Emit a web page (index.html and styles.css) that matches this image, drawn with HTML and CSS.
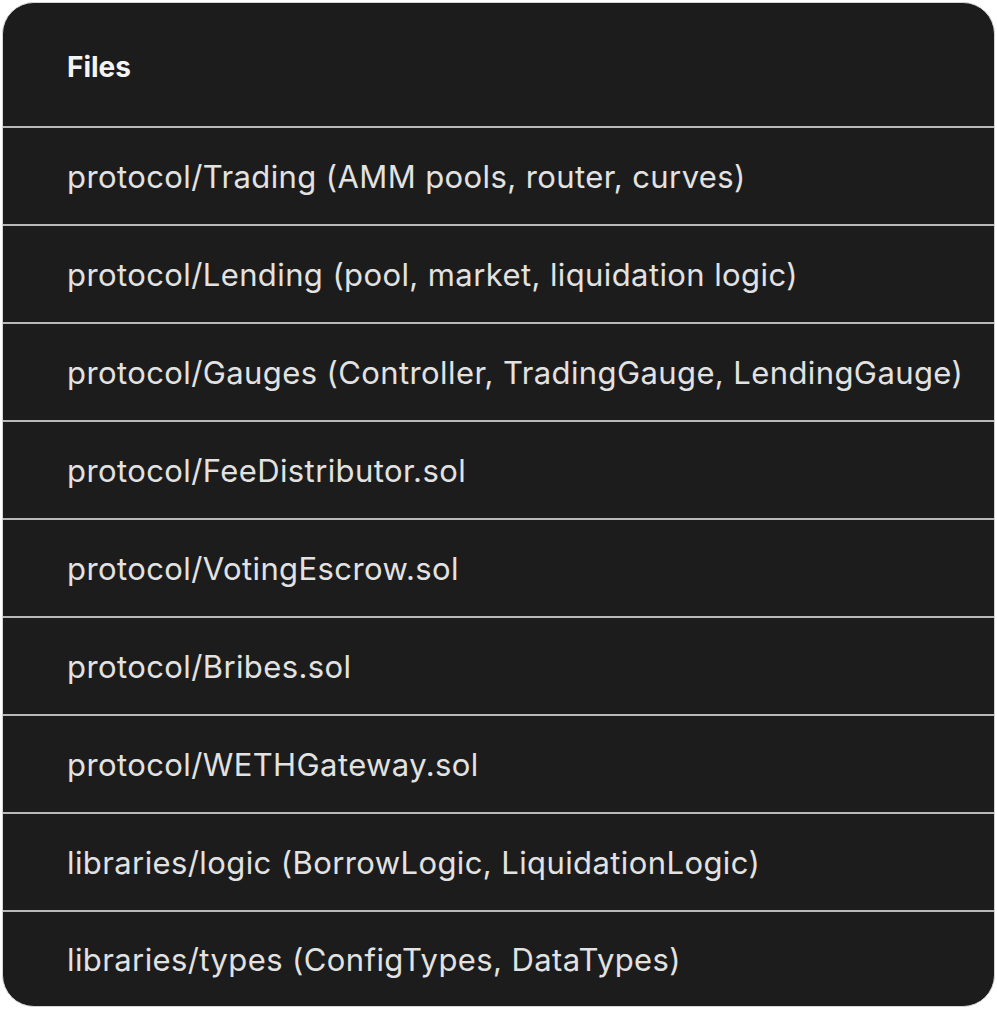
FILE: index.html
```html
<!DOCTYPE html>
<html>
<head>
<meta charset="utf-8">
<link rel="stylesheet" href="styles.css">
</head>
<body>
<div class="card">
  <div class="row header">Files</div>
  <div class="row">protocol/Trading (AMM pools, router, curves)</div>
  <div class="row">protocol/Lending (pool, market, liquidation logic)</div>
  <div class="row">protocol/Gauges (Controller, TradingGauge, LendingGauge)</div>
  <div class="row">protocol/FeeDistributor.sol</div>
  <div class="row">protocol/VotingEscrow.sol</div>
  <div class="row">protocol/Bribes.sol</div>
  <div class="row">protocol/WETHGateway.sol</div>
  <div class="row">libraries/logic (BorrowLogic, LiquidationLogic)</div>
  <div class="row last">libraries/types (ConfigTypes, DataTypes)</div>
</div>
</body>
</html>
```

FILE: styles.css
```css
html, body {
  margin: 0;
  padding: 0;
  background: #ffffff;
}
body {
  padding: 2px;
  font-family: Inter, "Noto Sans", sans-serif;
}
.card {
  width: 993px;
  height: 1005px;
  box-sizing: border-box;
  background: #1c1c1c;
  border: 1px solid #d4d4d4;
  border-radius: 32px;
  overflow: hidden;
  display: flex;
  flex-direction: column;
}
.row {
  height: 96px;
  flex: none;
  display: flex;
  align-items: center;
  padding-left: 64px;
  color: #e2e2e2;
  font-size: 31px;
  letter-spacing: 0.4px;
  border-bottom: 2px solid #b8b8b8;
  white-space: nowrap;
}
.row.header {
  height: 125px;
  box-sizing: border-box;
  padding-top: 4px;
  color: #f4f4f4;
  font-weight: 700;
  font-size: 28px;
  letter-spacing: 0;
}
.row.last {
  border-bottom: none;
  flex: 1;
}
```
